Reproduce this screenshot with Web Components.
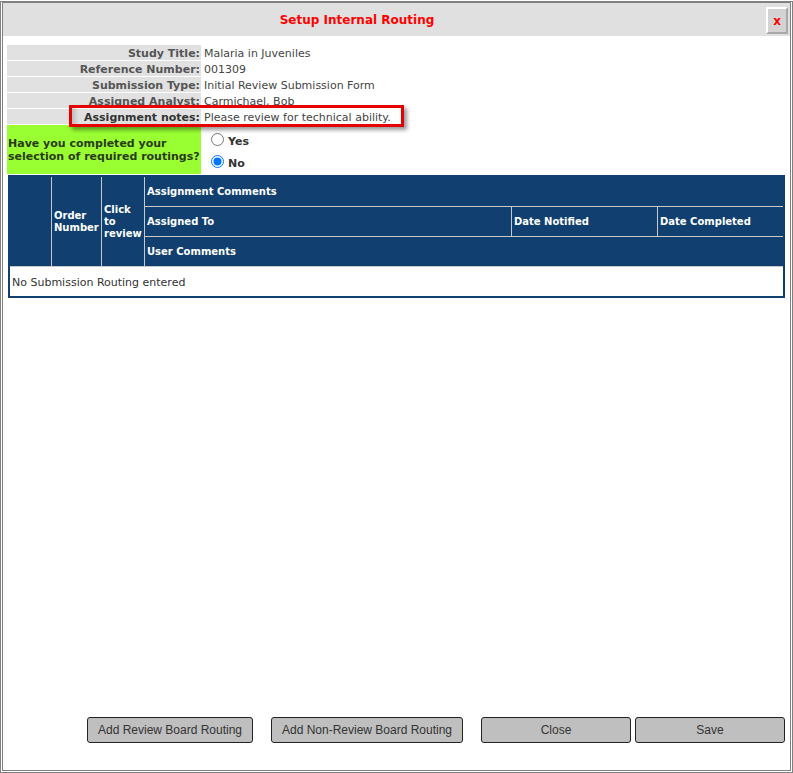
<!DOCTYPE html>
<html><head><meta charset="utf-8">
<style>
html,body{margin:0;padding:0;height:100%;background:#fff;overflow:hidden}
body{font-family:"DejaVu Sans",Verdana,sans-serif;font-size:11px;color:#333}
</style></head><body>
<routing-dialog>
  <span slot="title">Setup Internal Routing</span>
  <info-row label="Study Title:">Malaria in Juveniles</info-row>
  <info-row label="Reference Number:">001309</info-row>
  <info-row label="Submission Type:">Initial Review Submission Form</info-row>
  <info-row label="Assigned Analyst:">Carmichael, Bob</info-row>
  <info-row label="Assignment notes:" strong>Please review for technical ability.</info-row>
</routing-dialog>
<script>
function def(name,html,setup){
  customElements.define(name,class extends HTMLElement{
    constructor(){super();const r=this.attachShadow({mode:'open'});r.innerHTML=html;}
    connectedCallback(){if(setup)setup(this,this.shadowRoot);}
  });
}
def('info-row',`<style>
:host{display:grid;grid-template-columns:194px 1fr;grid-template-rows:15px;height:15px;margin-bottom:1px;line-height:17px;white-space:nowrap}
.l{background:#e1e1e1;text-align:right;font-weight:700;color:#555;padding-right:1px}
:host([strong]) .l{color:#333}
.v{padding-left:3px;color:#444}
</style><div class="l"></div><div class="v"><slot></slot></div>`,(h,r)=>{r.querySelector('.l').textContent=h.getAttribute('label')});
def('radio-choice',`<style>
:host{display:flex;align-items:center;font-weight:700;color:#333;height:22px}
svg{width:13px;height:13px;margin-right:4px;flex:none;position:relative;top:-2px}
</style><svg viewBox="0 0 13 13"></svg><slot></slot>`,(h,r)=>{
  r.querySelector('svg').innerHTML=h.hasAttribute('checked')
   ?'<circle cx="6.5" cy="6.5" r="6" fill="#fff" stroke="#0075ff"/><circle cx="6.5" cy="6.5" r="4" fill="#0075ff"/>'
   :'<circle cx="6.5" cy="6.5" r="6" fill="#fff" stroke="#767676"/>'});
def('action-button',`<style>
:host{display:flex;align-items:center;justify-content:center;box-sizing:border-box;height:26px;background:#bfbfbf;border:1px solid #222;border-radius:3px;font:12px "Liberation Sans",Arial,sans-serif;color:#333}
</style><slot></slot>`);
def('routing-table',`<style>
:host{display:block;box-sizing:border-box;margin:2px 0 0 1px;width:777px;border:2px solid #103f70;background:#fff}
.head{display:grid;grid-template-columns:41px 50px 43px 367px 146px 126px;grid-template-rows:29px 30px 30px;background:#103f70;color:#fff;font-weight:700;font-size:10px;line-height:12px}
.c{display:flex;align-items:center;padding-left:2px;border-left:1px solid #c9c9c9;border-top:1px solid #c9c9c9}
.span{grid-row:1/4;border-top:0}
.first{grid-row:1/4;border:0}
.w{grid-column:4/7}
.top{border-top:0}
.empty{box-sizing:border-box;height:30px;line-height:31px;padding-left:2px;border-top:1px solid #c9c9c9;color:#333}
</style><div class="head">
<div class="c first"></div><div class="c span">Order Number</div><div class="c span">Click to review</div>
<div class="c w top">Assignment Comments</div>
<div class="c">Assigned To</div><div class="c">Date Notified</div><div class="c">Date Completed</div>
<div class="c w">User Comments</div>
</div><div class="empty">No Submission Routing entered</div>`);
def('routing-dialog',`<style>
:host{display:block;box-sizing:border-box;width:793px;height:772px;margin-top:1px;border:1px solid #808080;padding:0 1px 1px 1px}
.frame{height:100%;display:flex;flex-direction:column;border:1px solid #808080;background:#fff;box-sizing:border-box;position:relative}
.bar{height:33px;background:#e0e0e0;display:flex;align-items:center;justify-content:center;flex:none;position:relative}
.bar ::slotted(*){color:#f00;font-weight:700;font-size:12px}
.title{padding-right:79px;padding-top:1px}
.x{position:absolute;right:2px;top:4px;width:22px;height:27px;box-sizing:border-box;background:#d3d3d3;border:2px solid;border-color:#fff #a9a9a9 #a9a9a9 #fff;color:#f00;font-weight:700;font-size:12px;display:flex;align-items:center;justify-content:center}
.body{flex:1;display:flex;flex-direction:column;padding:9px 4px 0 4px;min-height:0}
.q{display:grid;grid-template-columns:194px 1fr;height:48px}
.ql{background:#99ff33;color:#2b3a1a;font-weight:700;display:flex;align-items:center;padding:1px 0 0 1px;line-height:13px;box-sizing:border-box}
.qr{padding:5px 0 0 10px}
.foot{margin-top:auto;display:flex;padding:0 0 27px 80px}
</style><div class="frame">
<div class="bar"><div class="title"><slot name="title"></slot></div><div class="x">x</div></div>
<div class="body"><slot></slot>
<div class="q"><div class="ql">Have you completed your selection of required routings?</div>
<div class="qr"><radio-choice>Yes</radio-choice><radio-choice checked>No</radio-choice></div></div>
<routing-table></routing-table>
<div class="foot">
<action-button style="width:166px;margin-right:18px">Add Review Board Routing</action-button>
<action-button style="width:192px;margin-right:18px">Add Non-Review Board Routing</action-button>
<action-button style="width:150px;margin-right:4px">Close</action-button>
<action-button style="width:150px">Save</action-button>
</div></div>
<callout-box></callout-box>
</div>`);
def('callout-box',`<style>
:host{position:absolute;left:66px;top:102px;width:335px;height:22px;box-sizing:border-box;border:3px solid #e60000;box-shadow:3px 3px 4px rgba(0,0,0,.4);background:linear-gradient(90deg,rgba(0,0,0,.16),rgba(0,0,0,0) 7px)}
</style>`);
</script>
</body></html>
